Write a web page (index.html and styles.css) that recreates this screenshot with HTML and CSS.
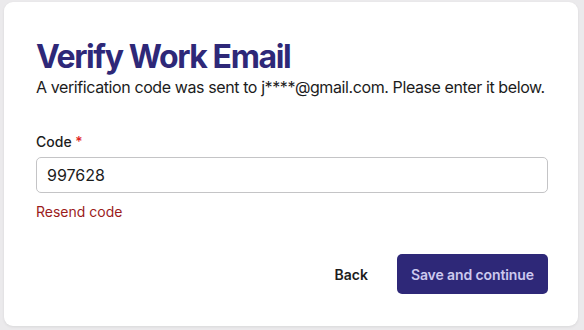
FILE: index.html
```html
<!DOCTYPE html>
<html>
<head>
<meta charset="utf-8">
<title>Verify Work Email</title>
<link rel="stylesheet" href="styles.css">
</head>
<body>
	<div class="card">
		<h1 class="title">Verify Work Email</h1>
		<p class="subtitle">A verification code was sent to j****@gmail.com. Please enter it below.</p>
		<div class="field">
			<label class="field-label" for="code">Code <span class="req">*</span></label>
			<input class="field-input" id="code" type="text" value="997628">
			<a class="resend" href="#">Resend code</a>
		</div>
		<div class="actions">
			<button class="btn-back" type="button">Back</button>
			<button class="btn-save" type="button">Save and continue</button>
		</div>
	</div>
</body>
</html>
```

FILE: styles.css
```css
html, body {
	margin: 0;
	padding: 0;
}
body {
	background: #ebeaec;
	font-family: Inter, "Noto Sans", sans-serif;
	color: #1c1c1c;
	padding: 2px 6px 4px 4px;
	height: 330px;
	box-sizing: border-box;
}
.card {
	background: #fff;
	border-radius: 9px;
	height: 324px;
	box-sizing: border-box;
	padding: 35px 30px 0 32px;
	box-shadow: 0 1px 3px rgba(0,0,0,0.08);
}
.title {
	margin: 0;
	font-size: 32px;
	font-weight: 700;
	line-height: 40px;
	color: #2e2878;
	letter-spacing: -1.4px;
}
.subtitle {
	margin: 0;
	font-size: 16px;
	line-height: 20px;
	letter-spacing: -0.4px;
	white-space: nowrap;
}
.field {
	margin-top: 36px;
	display: flex;
	flex-direction: column;
}
.field-label {
	font-size: 14px;
	font-weight: 500;
	line-height: 18px;
}
.req {
	color: #e02424;
}
.field-input {
	margin-top: 6px;
	height: 36px;
	box-sizing: border-box;
	border: 1px solid #c4c4c6;
	border-radius: 5px;
	padding: 0 10px;
	font-family: Inter, "Noto Sans", sans-serif;
	font-size: 16px;
	color: #1c1c1c;
	outline: none;
}
.resend {
	margin-top: 10px;
	font-size: 14px;
	line-height: 18px;
	color: #9b1c1c;
	text-decoration: none;
}
.actions {
	margin-top: 33px;
	display: flex;
	justify-content: flex-end;
	align-items: center;
	gap: 13px;
}
.btn-back, .btn-save {
	font-family: Inter, "Noto Sans", sans-serif;
	font-size: 14px;
	font-weight: 600;
	border: none;
	border-radius: 5px;
	height: 40px;
	cursor: pointer;
}
.btn-back {
	background: none;
	color: #1c1c1c;
	padding: 0 16px;
}
.btn-save {
	background: #2e2878;
	color: #cdc9ef;
	padding: 0 14px;
	letter-spacing: -0.1px;
}
```
